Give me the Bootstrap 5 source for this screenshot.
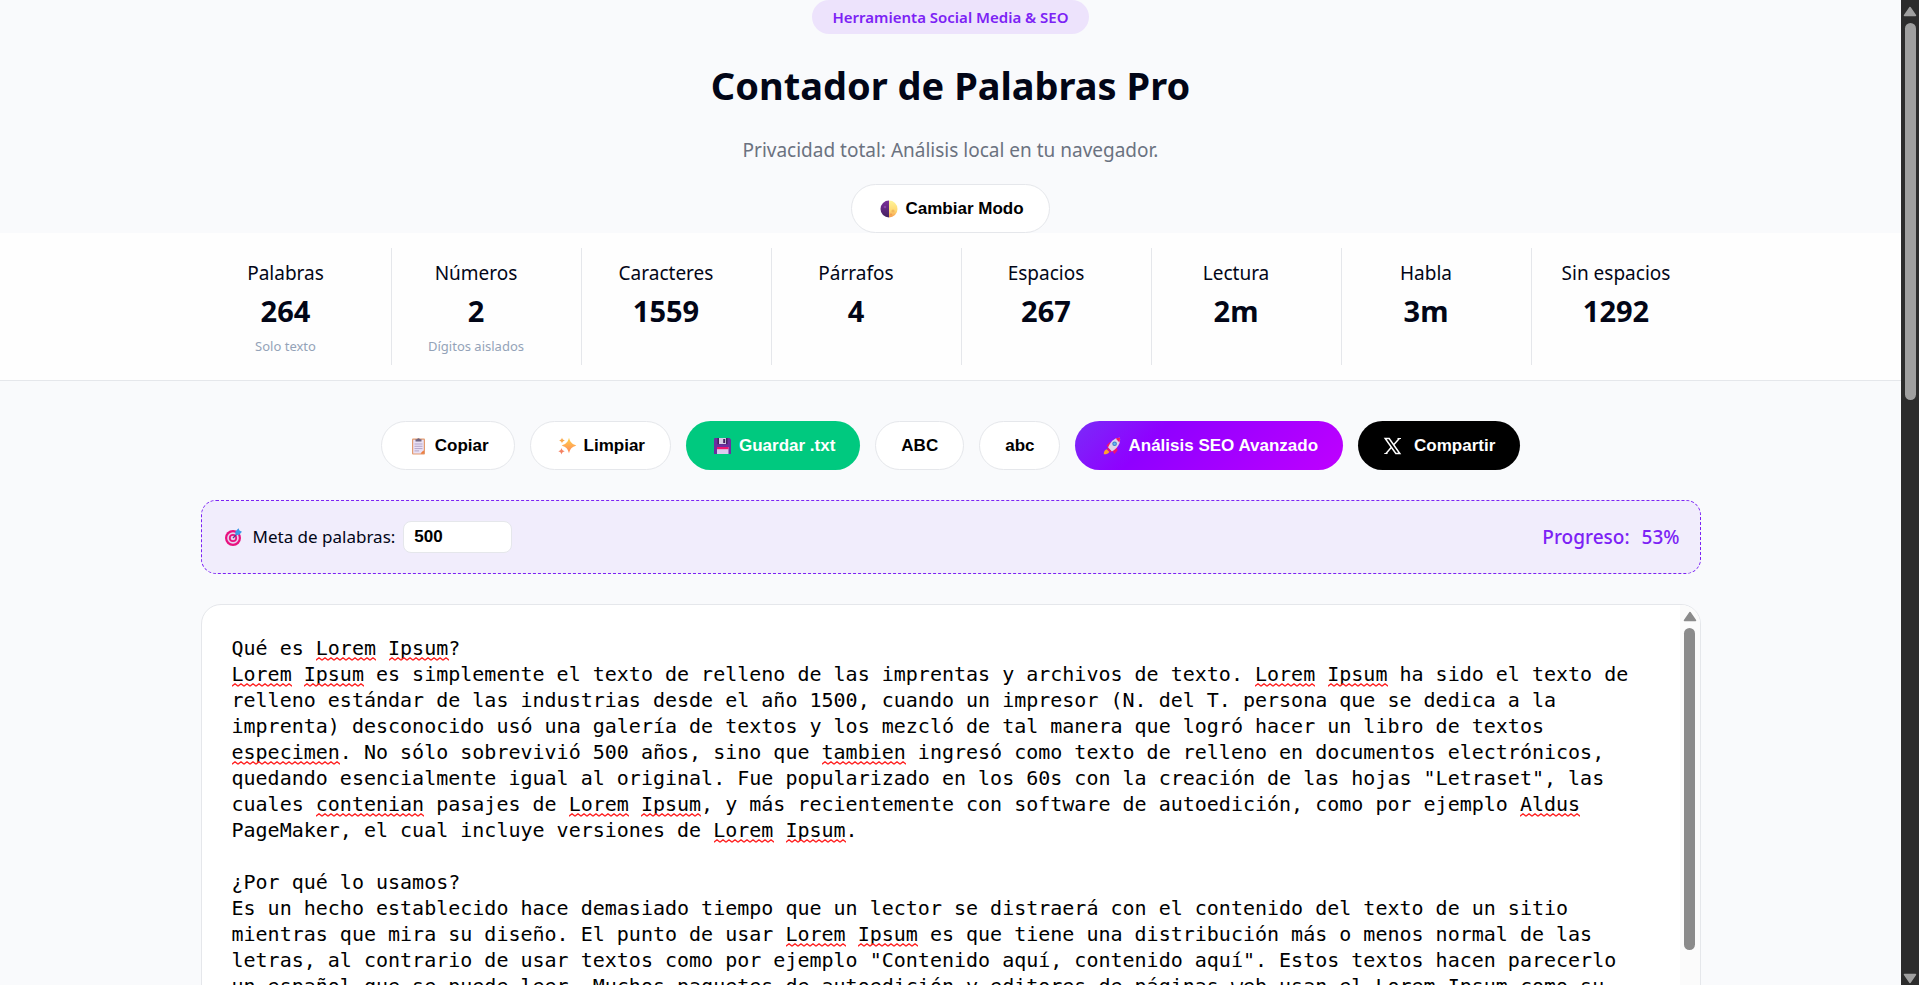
<!DOCTYPE html>
<html lang="es">
<head>
<meta charset="utf-8">
<meta name="viewport" content="width=device-width, initial-scale=1">
<title>Contador de Palabras Pro</title>
<link rel="stylesheet" href="https://cdn.jsdelivr.net/npm/bootstrap@5.3.0/dist/css/bootstrap.min.css">
<style>
  :root {
    --brand: #7c22f5;
    --ink: #020617;
    --line: #e5e7eb;
    --page: #f9fafc;
  }
  body {
    background: var(--page);
    color: var(--ink);
    font-family: "Noto Sans", "Open Sans", sans-serif;
    font-size: 17px;
    line-height: 26px;
  }
  .wrap { width: 100%; max-width: 1500px; margin-inline: auto; }

  .tagline {
    background: #ede3fc;
    color: var(--brand);
    font-size: 15px;
    line-height: 22px;
    font-weight: 600;
    padding: 6px 20px;
  }
  .title { font-size: 38px; line-height: 56px; font-weight: 700; margin: 23px 0 24px; }
  .subtitle { color: #6b7280; font-size: 19px; line-height: 26px; margin-bottom: 21px; }

  .tool {
    --bs-btn-bg: #fff;
    --bs-btn-color: #000;
    --bs-btn-border-color: var(--line);
    --bs-btn-hover-bg: #f3f4f6;
    --bs-btn-hover-color: #000;
    --bs-btn-hover-border-color: var(--line);
    --bs-btn-padding-x: 25px;
    --bs-btn-padding-y: 13px;
    --bs-btn-font-size: 17px;
    --bs-btn-font-weight: 700;
    --bs-btn-line-height: 21px;
    --bs-btn-font-family: "Liberation Sans", Arial, sans-serif;
    --bs-btn-border-radius: 50px;
    gap: 5px;
  }
  .tool-save { --bs-btn-bg: #00c97f; --bs-btn-color: #fff; --bs-btn-border-width: 0; }
  .tool-share { --bs-btn-bg: #000; --bs-btn-color: #fff; --bs-btn-border-width: 0; gap: 8px; }
  .tool-seo {
    --bs-btn-color: #fff;
    --bs-btn-border-width: 0;
    background: linear-gradient(135deg, #7a2cf8, #8f00ff 30%, #bf00ff);
  }
  .glyph { width: 23px; height: 18px; flex: none; }

  .stats { background: #fefefe; border-bottom: 1px solid var(--line); padding: 15px 0; }
  .stats-grid { display: grid; grid-template-columns: repeat(8, 1fr); gap: 20px; }
  .stat { padding: 12px 0 9px; }
  .stat + .stat { border-left: 1px solid var(--line); }
  .stat-label { font-size: 19px; }
  .stat-value { font-size: 29px; line-height: 44px; font-weight: 700; margin-top: 3px; }
  .stat-hint { font-size: 13px; line-height: 20px; color: #94a3b8; margin-top: 3px; }

  .tools { gap: 15px; padding: 40px 0 30px; }

  .goal {
    background: #f1edfc;
    border: 1px dashed var(--brand);
    border-radius: 15px;
    padding: 20px;
    min-height: 74px;
    margin-bottom: 30px;
  }
  .goal-input {
    width: 109px;
    height: 32px;
    padding: 0 10px;
    border: 1px solid var(--line);
    border-radius: 8px;
    font: 700 17px "Liberation Sans", Arial, sans-serif;
    color: #000;
  }
  .progress-note { color: var(--brand); font-size: 19px; font-weight: 500; gap: 12px; }

  .editor { position: relative; height: 500px; border: 1px solid var(--line); border-radius: 20px; background: #fff; overflow: hidden; }
  .editor-text {
    flex: 1;
    border: 0;
    outline: 0;
    resize: none;
    overflow: hidden;
    background: transparent;
    color: #000;
    padding: 30px;
    font: 20px/26px "DejaVu Sans Mono", "Liberation Mono", monospace;
  }
  .typo {
    position: absolute;
    height: 4px;
    pointer-events: none;
    background: url("data:image/svg+xml,%3Csvg xmlns='http://www.w3.org/2000/svg' width='6' height='4'%3E%3Cpath d='M0 3.2L3 .8L6 3.2' fill='none' stroke='%23f22' stroke-width='1.3'/%3E%3C/svg%3E") repeat-x;
  }

  .bar { display: flex; flex-direction: column; align-items: center; flex: none; }
  .bar svg { width: 14px; height: 11px; flex: none; }
  .bar-thumb { border-radius: 6px; width: 11px; margin-top: 6px; }
  .bar-editor { width: 20px; background: #fbfbfb; color: #8b8b8b; padding-top: 6px; }
  .bar-editor .bar-thumb { background: #8b8b8b; height: 322px; }
  .bar-page { width: 18px; background: #2c2c2c; color: #9f9f9f; padding: 6px 0 1px; }
  .bar-page .bar-thumb { background: #9f9f9f; height: 38.5%; }
</style>
</head>
<body>
<div class="d-flex vh-100 overflow-hidden">
  <main class="flex-grow-1 overflow-hidden">
    <header class="d-flex flex-column align-items-center text-center">
      <span class="tagline rounded-pill">Herramienta Social Media &amp; SEO</span>
      <h1 class="title">Contador de Palabras Pro</h1>
      <p class="subtitle">Privacidad total: Análisis local en tu navegador.</p>
      <button type="button" class="btn tool d-inline-flex align-items-center">
        <svg class="glyph" viewBox="0 0 23 18" aria-hidden="true">
          <defs><linearGradient id="moon" x1="0" y1="0" x2="0" y2="1"><stop offset="0" stop-color="#fff59a"/><stop offset=".6" stop-color="#ffd872"/><stop offset="1" stop-color="#f59a4c"/></linearGradient>
          <linearGradient id="shade" x1="0" y1="0" x2="0" y2="1"><stop offset="0" stop-color="#7a2d9a"/><stop offset="1" stop-color="#43215f"/></linearGradient></defs>
          <path d="M12 .5a8.5 8.5 0 0 0 0 17z" fill="url(#shade)"/>
          <path d="M12 .5a8.5 8.5 0 0 1 0 17z" fill="url(#moon)"/>
          <circle cx="16" cy="11" r="1.6" fill="#f3b85c"/><circle cx="14" cy="14.5" r="1" fill="#ee9c50"/><circle cx="8" cy="7" r="1.3" fill="#8a3fa8"/>
        </svg>Cambiar Modo</button>
    </header>

    <section class="stats" aria-label="Estadísticas">
      <div class="wrap stats-grid text-center">
        <div class="stat"><div class="stat-label">Palabras</div><div class="stat-value">264</div><div class="stat-hint">Solo texto</div></div>
        <div class="stat"><div class="stat-label">Números</div><div class="stat-value">2</div><div class="stat-hint">Dígitos aislados</div></div>
        <div class="stat"><div class="stat-label">Caracteres</div><div class="stat-value">1559</div></div>
        <div class="stat"><div class="stat-label">Párrafos</div><div class="stat-value">4</div></div>
        <div class="stat"><div class="stat-label">Espacios</div><div class="stat-value">267</div></div>
        <div class="stat"><div class="stat-label">Lectura</div><div class="stat-value">2m</div></div>
        <div class="stat"><div class="stat-label">Habla</div><div class="stat-value">3m</div></div>
        <div class="stat"><div class="stat-label">Sin espacios</div><div class="stat-value">1292</div></div>
      </div>
    </section>

    <div class="wrap">
      <div class="tools d-flex flex-wrap justify-content-center">
        <button type="button" class="btn tool d-inline-flex align-items-center">
          <svg class="glyph" viewBox="0 0 23 18" aria-hidden="true">
            <rect x="5" y="1.5" width="13" height="16" rx="1" fill="#e39a6e"/>
            <path d="M6.2 2.8h10.6v10.4l-3.2 3.2H6.2z" fill="#e9e0f4"/><path d="M16.8 13.2v3.2h-3.2z" fill="#f07c3e"/>
            <path d="M8.5 4.5V2.2h1.6a1.5 1.5 0 0 1 2.8 0h1.6v2.3z" fill="#6f6480"/>
            <path d="M7.5 7h8M7.5 9.3h8M7.5 11.6h8M7.5 13.9h4.6" stroke="#b3a5c8"/>
          </svg>Copiar</button>
        <button type="button" class="btn tool d-inline-flex align-items-center">
          <svg class="glyph" viewBox="0 0 23 18" aria-hidden="true">
            <defs><linearGradient id="spark" x1="0" y1="0" x2="0" y2="1"><stop offset="0" stop-color="#ffd34d"/><stop offset="1" stop-color="#ff8558"/></linearGradient></defs>
            <path d="M13 .8c1.200 4.300 2.700 6 7.300 7.700-4.600 1.700-6.100 3.400-7.300 7.700-1.200-4.300-2.700-6-7.300-7.700C10.300 6.800 11.800 5.100 13 .8z" fill="url(#spark)"/>
            <path d="M6 .5c.4 1.900 1.200 2.500 2.900 3-1.700.5-2.500 1.100-2.900 3-.4-1.900-1.200-2.500-2.900-3 1.700-.5 2.500-1.100 2.900-3z" fill="#f9a94d"/>
            <path d="M5.500 11c.5 2 1.400 2.800 3.200 3.300-1.800.5-2.700 1.200-3.200 3.200-.5-2-1.400-2.700-3.200-3.200 1.800-.5 2.700-1.300 3.200-3.300z" fill="#f58162"/>
          </svg>Limpiar</button>
        <button type="button" class="btn tool tool-save d-inline-flex align-items-center">
          <svg class="glyph" viewBox="0 0 23 18" aria-hidden="true">
            <path d="M4 1h14.500L20 2.500V17H3V2a1 1 0 0 1 1-1z" fill="#6b2fa0"/>
            <path d="M6.500 1h10v6.200h-10z" fill="#43205f"/><path d="M8 1h7v6H8z" fill="#d5cde6"/><path d="M12.200 2h2v4h-2z" fill="#43205f"/>
            <path d="M6 10h11.500v7H6z" fill="#dccbef"/><path d="M6 10h11.500v2.200H6z" fill="#f0146e"/>
          </svg>Guardar .txt</button>
        <button type="button" class="btn tool">ABC</button>
        <button type="button" class="btn tool">abc</button>
        <button type="button" class="btn tool tool-seo d-inline-flex align-items-center">
          <svg class="glyph" viewBox="0 0 23 18" aria-hidden="true">
            <path d="M6.500 8.500l3-3.200 3 1.200-4 4.500zM14.500 17l3-3.500-.8-4-4.700 4z" fill="#f0146e"/>
            <path d="M20 .8c-5-.3-9 3-12 9.700l3.800 4C17.500 11.500 20.800 6.500 20 .8z" fill="#dcd3ea"/>
            <path d="M20 .8c-1.600-.1-3 .2-4.300.8l3.700 4c.5-1.600.7-3.200.6-4.800z" fill="#f0146e"/>
            <circle cx="14.600" cy="6.800" r="2.300" fill="#3f79c8"/><circle cx="14.600" cy="6.800" r="1.300" fill="#63b8f5"/>
            <path d="M8 10.500l3.800 4-1.500 1L6.800 12z" fill="#f0146e"/>
            <path d="M6.600 12.200c-2 .6-2.800 2.400-2.800 5 2.600.1 4.500-.6 5.600-2.300z" fill="#ffa12e"/>
          </svg>Análisis SEO Avanzado</button>
        <button type="button" class="btn tool tool-share d-inline-flex align-items-center">
          <svg class="glyph" viewBox="0 0 23 18" aria-hidden="true" fill="none" stroke="#fff" stroke-width="1.500">
            <path d="M2.200 1.500h4l10.600 15h-4zM16.500 1.200l-6 6.700M8.600 10L2.800 16.800"/>
            <path d="M14.500 1.500h3.500M1.300 16.500h3.200" stroke-width="1"/>
          </svg>Compartir</button>
      </div>

      <div class="goal d-flex justify-content-between align-items-center">
        <div class="d-flex align-items-center">
          <svg class="glyph" viewBox="0 0 23 18" aria-hidden="true">
            <circle cx="11" cy="10" r="8" fill="#e8117f"/><circle cx="11" cy="10" r="5.800" fill="#e6d3ee"/><circle cx="11" cy="10" r="4.100" fill="#e8117f"/><circle cx="11" cy="10" r="2.300" fill="#e6d3ee"/>
            <path d="M11 10l5-5" stroke="#5b3b8c" stroke-width="1.200"/>
            <path d="M13.500 6.800l-.3-3L16.500.3l1 2.200 2.500 1.300-3 3.300z" fill="#3d9be8"/>
          </svg>
          <label for="goal" class="ms-2 me-2">Meta de palabras:</label>
          <input id="goal" class="goal-input" type="text" inputmode="numeric" value="500">
        </div>
        <div class="progress-note d-flex"><span>Progreso:</span><span>53%</span></div>
      </div>

      <div class="editor d-flex">
        <textarea id="text" class="editor-text" spellcheck="false" aria-label="Texto">Qué es Lorem Ipsum?
Lorem Ipsum es simplemente el texto de relleno de las imprentas y archivos de texto. Lorem Ipsum ha sido el texto de relleno estándar de las industrias desde el año 1500, cuando un impresor (N. del T. persona que se dedica a la imprenta) desconocido usó una galería de textos y los mezcló de tal manera que logró hacer un libro de textos especimen. No sólo sobrevivió 500 años, sino que tambien ingresó como texto de relleno en documentos electrónicos, quedando esencialmente igual al original. Fue popularizado en los 60s con la creación de las hojas "Letraset", las cuales contenian pasajes de Lorem Ipsum, y más recientemente con software de autoedición, como por ejemplo Aldus PageMaker, el cual incluye versiones de Lorem Ipsum.

¿Por qué lo usamos?
Es un hecho establecido hace demasiado tiempo que un lector se distraerá con el contenido del texto de un sitio mientras que mira su diseño. El punto de usar Lorem Ipsum es que tiene una distribución más o menos normal de las letras, al contrario de usar textos como por ejemplo "Contenido aquí, contenido aquí". Estos textos hacen parecerlo un español que se puede leer. Muchos paquetes de autoedición y editores de páginas web usan el Lorem Ipsum como su texto por defecto.</textarea>
        <div class="bar bar-editor" aria-hidden="true">
          <svg viewBox="0 0 14 11"><path d="M7 1.500L12.500 9.500H1.500z" fill="currentColor" stroke="currentColor" stroke-width="1.500" stroke-linejoin="round"/></svg>
          <div class="bar-thumb"></div>
        </div>
      </div>
    </div>
  </main>

  <div class="bar bar-page" aria-hidden="true">
    <svg viewBox="0 0 14 11"><path d="M7 1.500L12.500 9.500H1.500z" fill="currentColor" stroke="currentColor" stroke-width="1.500" stroke-linejoin="round"/></svg>
    <div class="bar-thumb"></div>
    <svg class="mt-auto" viewBox="0 0 14 11"><path d="M7 9.500L12.500 1.500H1.500z" fill="currentColor" stroke="currentColor" stroke-width="1.500" stroke-linejoin="round"/></svg>
  </div>
</div>

<script src="https://cdn.jsdelivr.net/npm/bootstrap@5.3.0/dist/js/bootstrap.bundle.min.js"></script>
<script>
  // Underlines unknown words: wraps the text in columns the way the text box does.
  const box = document.getElementById('text');
  const unknown = /Lorem|Ipsum|especimen|tambien|contenian|Aldus/g;

  function markTypos() {
    document.querySelectorAll('.typo').forEach(el => el.remove());
    const css = getComputedStyle(box);
    const ctx = document.createElement('canvas').getContext('2d');
    ctx.font = css.fontSize + ' ' + css.fontFamily;
    const charWidth = ctx.measureText('m'.repeat(100)).width / 100;
    const left = parseFloat(css.paddingLeft), top = parseFloat(css.paddingTop);
    const lineHeight = parseFloat(css.lineHeight);
    const columns = Math.floor((box.clientWidth - left - parseFloat(css.paddingRight)) / charWidth);
    const lines = [];
    for (const paragraph of box.value.split('\n')) {
      let line = '';
      for (const word of paragraph.split(' ')) {
        if (line && (line + ' ' + word).length > columns) { lines.push(line); line = word; }
        else line = line ? line + ' ' + word : word;
      }
      lines.push(line);
    }
    lines.forEach((line, row) => {
      for (const hit of line.matchAll(unknown)) {
        const mark = document.createElement('span');
        mark.className = 'typo';
        mark.style.left = Math.round(left + hit.index * charWidth) + 'px';
        mark.style.top = (top + (row + 1) * lineHeight - 4) + 'px';
        mark.style.width = Math.round(hit[0].length * charWidth) + 'px';
        box.parentElement.append(mark);
      }
    });
  }
  box.addEventListener('input', markTypos);
  window.addEventListener('resize', markTypos);
  markTypos();
</script>
</body>
</html>
